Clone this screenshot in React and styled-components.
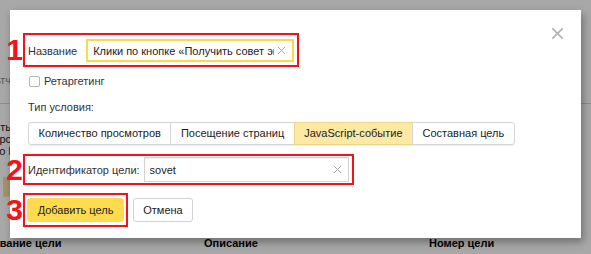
import React from "react";
import styled, { createGlobalStyle } from "styled-components";

const GlobalStyle = createGlobalStyle`
	html, body {
		margin: 0;
		padding: 0;
	}
	body {
		font-family: "Liberation Sans", Arial, sans-serif;
		background: #fff;
	}
`;

const RED = "#f5121a";

//Small cross used in inputs and in the modal corner
const Cross = ({ size, color, width }) => (
	<svg width={size} height={size} viewBox="0 0 10 10">
		<path
			d="M1 1 L9 9 M9 1 L1 9"
			stroke={color}
			strokeWidth={width}
			fill="none"
		/>
	</svg>
);

const App = () => {
	const tabs = [
		"Количество просмотров",
		"Посещение страниц",
		"JavaScript-событие",
		"Составная цель",
	];

	return (
		<Page>
			<GlobalStyle />
			{/* page behind the dialog */}
			<BgPage>
				<SideCol>
					<SideNote>фильтч</SideNote>
				</SideCol>
				<Divider />
				<SideCol>
					<SideText>
						<span>Добавить</span>
						<span>Перейти к сайту рс</span>
						<span>описание о l</span>
					</SideText>
					<TanChip />
				</SideCol>
				<HeaderRow>
					<HeadCell $width={224}>Название цели</HeadCell>
					<HeadCell $width={225}>Описание</HeadCell>
					<HeadCell>Номер цели</HeadCell>
				</HeaderRow>
			</BgPage>
			<Overlay />

			<Modal>
				<CloseButton>
					<Cross size={13} color="#b3b3b3" width={1.3} />
				</CloseButton>

				<Highlight $width={276} $pad="4px 3px 3px 3px">
					<Marker>1</Marker>
					<Label>Название</Label>
					<Field $width={209} $height={23} $gap={9} $accent>
						<FieldInput
							readOnly
							value="Клики по кнопке «Получить совет экспертов»"
						/>
						<ClearMark>
							<Cross size={9} color="#a0a0a0" width={1} />
						</ClearMark>
					</Field>
				</Highlight>

				<CheckRow>
					<CheckBox />
					<span>Ретаргетинг</span>
				</CheckRow>

				<SectionTitle>Тип условия:</SectionTitle>

				<Tabs>
					{tabs.map((tab, i) => (
						<Tab key={tab} $active={i === 2}>
							{tab}
						</Tab>
					))}
				</Tabs>

				<Highlight $width={331} $pad="1px 3px" $top={9}>
					<Marker>2</Marker>
					<Label>Идентификатор цели:</Label>
					<Field $width={209} $height={25} $gap={4}>
						<FieldInput readOnly value="sovet" />
						<ClearMark>
							<Cross size={9} color="#a0a0a0" width={1} />
						</ClearMark>
					</Field>
				</Highlight>

				<ButtonRow>
					<Highlight $width={105} $pad="3px 2px">
						<Marker>3</Marker>
						<Button $primary $width={97}>
							Добавить цель
						</Button>
					</Highlight>
					<Button $width={60}>Отмена</Button>
				</ButtonRow>
			</Modal>
		</Page>
	);
};

const Page = styled.div`
	position: relative;
	width: 591px;
	height: 254px;
	overflow: hidden;
	background: #fff;
	font-size: 11px;
	color: #222;
`;

const BgPage = styled.div`
	display: flex;
	flex-direction: column;
	padding-top: 74px;
`;

const SideCol = styled.div`
	width: 11px;
	display: flex;
	flex-direction: column;
	align-items: flex-end;
	white-space: nowrap;
`;

const SideNote = styled.div`
	color: #8a8a8a;
	line-height: 13px;
`;

const Divider = styled.div`
	margin-top: 16px;
	border-top: 1px solid #d8d8d8;
`;

const SideText = styled.div`
	margin-top: 17px;
	display: flex;
	flex-direction: column;
	align-items: flex-end;
	line-height: 12px;
	color: #222;
`;

const TanChip = styled.div`
	width: 8px;
	height: 20px;
	margin-top: 20px;
	background: #f4e1a4;
	border-radius: 0 3px 3px 0;
`;

const HeaderRow = styled.div`
	display: flex;
	margin-top: 40px;
	margin-left: -20px;
	font-weight: bold;
	color: #000;
	white-space: nowrap;
	line-height: 13px;
`;

const HeadCell = styled.div`
	flex: 0 0 ${(p) => (p.$width ? `${p.$width}px` : "auto")};
`;

const Overlay = styled.div`
	position: absolute;
	inset: 0;
	background: rgba(0, 0, 0, 0.34);
`;

const Modal = styled.div`
	position: absolute;
	left: 10px;
	top: 10px;
	width: 571px;
	height: 228px;
	box-sizing: border-box;
	padding: 23px 0 0 18px;
	background: #fff;
	box-shadow: 2px 4px 8px rgba(0, 0, 0, 0.35);
	display: flex;
	flex-direction: column;
	align-items: flex-start;
	color: #222;
`;

const CloseButton = styled.div`
	position: absolute;
	top: 17px;
	right: 17px;
	display: flex;
`;

const Highlight = styled.div`
	position: relative;
	display: flex;
	align-items: center;
	box-sizing: border-box;
	width: ${(p) => p.$width}px;
	margin-left: -5px;
	margin-top: ${(p) => p.$top || 0}px;
	padding: ${(p) => p.$pad};
	border: 2px solid ${RED};
`;

const Marker = styled.span`
	position: absolute;
	right: calc(100% + 2px);
	top: 50%;
	transform: translateY(-50%);
	font-size: 30px;
	font-weight: bold;
	line-height: 1;
	color: ${RED};
`;

const Label = styled.span`
	white-space: nowrap;
	color: #333;
`;

const Field = styled.div`
	display: flex;
	align-items: center;
	box-sizing: border-box;
	width: ${(p) => p.$width}px;
	height: ${(p) => p.$height}px;
	margin-left: ${(p) => p.$gap}px;
	padding: 0 6px 0 5px;
	background: #fff;
	border: ${(p) => (p.$accent ? "2px solid #ffd84a" : "1px solid #d2d2d2")};
	box-shadow: ${(p) =>
		p.$accent ? "none" : "inset 0 1px 1px rgba(0, 0, 0, 0.06)"};
`;

const FieldInput = styled.input`
	flex: 1;
	min-width: 0;
	border: none;
	outline: none;
	padding: 0;
	background: transparent;
	font: inherit;
	color: #222;
`;

const ClearMark = styled.span`
	display: flex;
	margin-left: 3px;
`;

const CheckRow = styled.div`
	display: flex;
	align-items: center;
	gap: 4px;
	height: 12px;
	margin-top: 8px;
	margin-left: 1px;
	color: #333;
`;

const CheckBox = styled.span`
	width: 11px;
	height: 11px;
	box-sizing: border-box;
	border: 1px solid #b5b5b5;
	border-radius: 2px;
	background: #fff;
`;

const SectionTitle = styled.div`
	margin-top: 13px;
	line-height: 14px;
	color: #333;
`;

const Tabs = styled.div`
	display: flex;
	margin-top: 8px;
	border-radius: 3px;
	box-shadow: 0 1px 1px rgba(0, 0, 0, 0.08);
`;

const Tab = styled.div`
	box-sizing: border-box;
	height: 23px;
	line-height: 21px;
	padding: 0 9.5px;
	margin-left: -1px;
	white-space: nowrap;
	color: #222;
	background: ${(p) => (p.$active ? "#fde9a3" : "#fff")};
	border: 1px solid ${(p) => (p.$active ? "#ecd487" : "#d6d6d6")};
	&:first-child {
		margin-left: 0;
		border-radius: 3px 0 0 3px;
	}
	&:last-child {
		border-radius: 0 3px 3px 0;
	}
`;

const ButtonRow = styled.div`
	display: flex;
	align-items: center;
	gap: 5px;
	margin-top: 8px;
`;

const Button = styled.div`
	box-sizing: border-box;
	width: ${(p) => p.$width}px;
	height: 24px;
	display: flex;
	align-items: center;
	justify-content: center;
	border-radius: 3px;
	color: #222;
	white-space: nowrap;
	background: ${(p) => (p.$primary ? "#ffdb4d" : "#fff")};
	border: 1px solid ${(p) => (p.$primary ? "#ffdb4d" : "#d2d2d2")};
`;

export default App;
